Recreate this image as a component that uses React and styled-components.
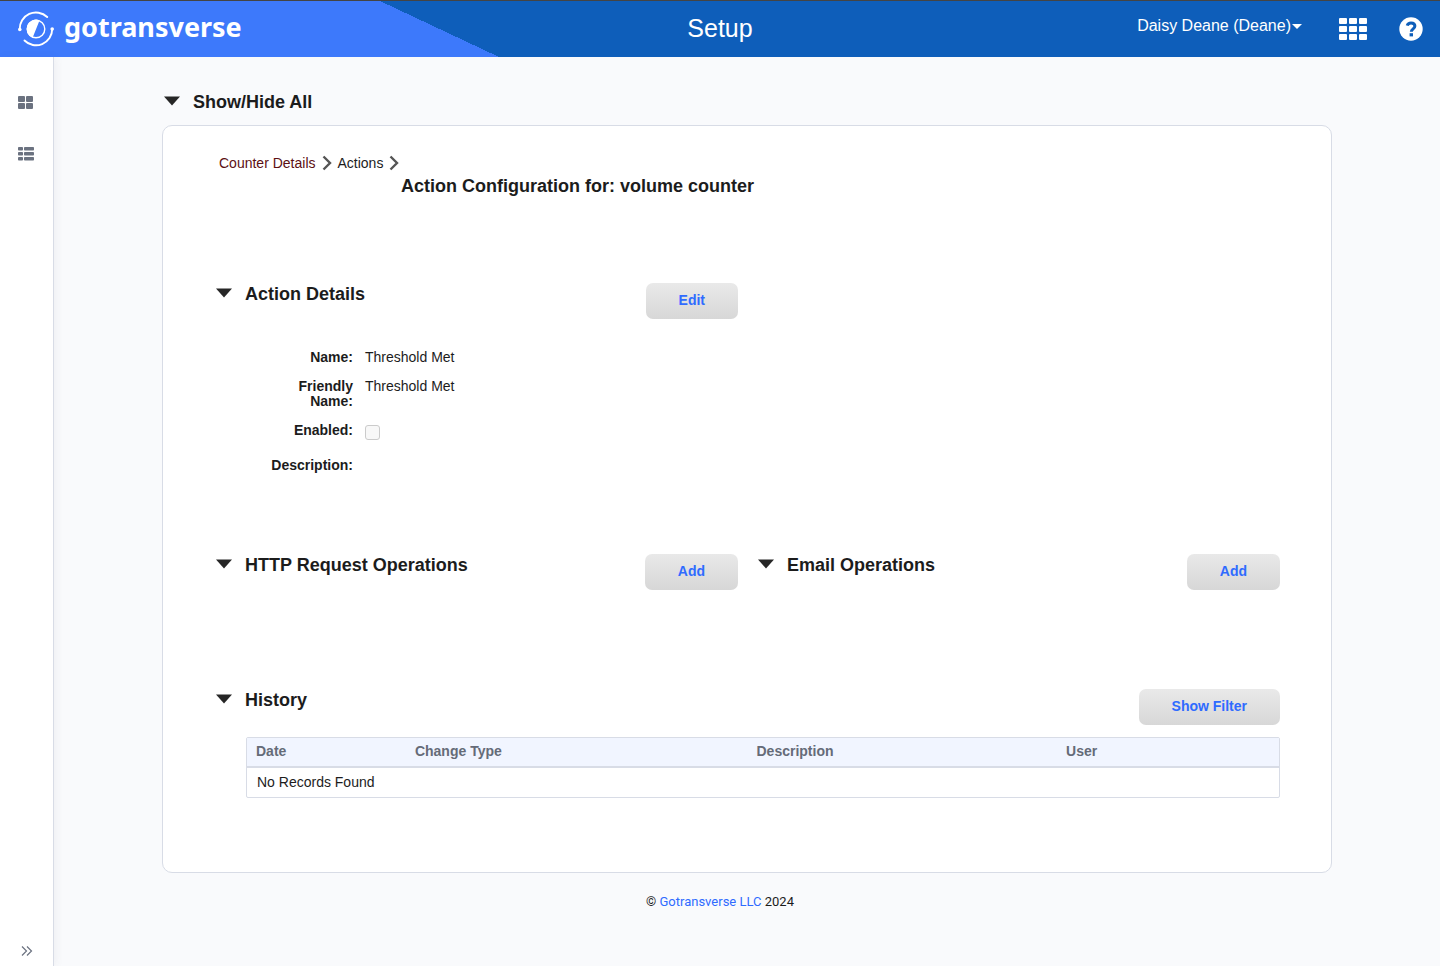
import { useState } from 'react'
import styled, { createGlobalStyle } from 'styled-components'

const GlobalStyle = createGlobalStyle`
  *, *::before, *::after {
    box-sizing: border-box;
  }

  body {
    margin: 0;
    background: #f9fafc;
    color: #1c1c1c;
    font-family: 'Liberation Sans', Arial, sans-serif;
    font-size: 14px;
    line-height: 15px;
  }

  button {
    font-family: inherit;
    cursor: pointer;
  }

  a {
    color: inherit;
    text-decoration: none;
  }
`

const Triangle = () => (
  <svg width="16" height="10" viewBox="0 0 16 10" aria-hidden="true">
    <path d="M0 0.5H16L8 9.5Z" fill="#262626" />
  </svg>
)

const Chevron = () => (
  <svg width="10" height="16" viewBox="0 0 10 16" aria-hidden="true">
    <path d="M1.5 1.5L8 8L1.5 14.5" fill="none" stroke="#555" strokeWidth="2.4" />
  </svg>
)

const LogoMark = () => (
  <svg width="36" height="36" viewBox="0 0 36 36" aria-hidden="true">
    <g fill="none" stroke="#fff" strokeWidth="1.9" strokeLinecap="round">
      <path d="M1.8 18.5A16.2 16.2 0 0 1 29.2 6" />
      <path d="M34.2 18A16.2 16.2 0 0 1 6.5 29.5" />
    </g>
    <circle cx="1.8" cy="18.5" r="1.8" fill="#fff" />
    <circle cx="34.2" cy="18" r="1.8" fill="#fff" />
    <circle cx="18" cy="18" r="8.8" fill="none" stroke="#fff" strokeWidth="1.4" />
    <path d="M21.6 9.3A9.4 9.4 0 1 0 14.6 26.8Z" fill="#fff" />
  </svg>
)

const AppsIcon = () => (
  <svg width="28" height="22" viewBox="0 0 28 22" fill="#fff" aria-hidden="true">
    {[0, 10, 20].map((x) =>
      [0, 8, 16].map((y) => <rect key={`${x}-${y}`} x={x} y={y} width="8" height="6" rx="1" />)
    )}
  </svg>
)

const HelpIcon = () => (
  <svg width="24" height="24" viewBox="0 0 24 24" aria-hidden="true">
    <circle cx="12" cy="12" r="11.7" fill="#fff" />
    <path
      d="M8.2 8.6C8.8 6.7 10.2 5.9 12 5.9C14.2 5.9 15.9 7.1 15.9 9.1C15.9 11.9 12.3 11.8 12.3 14.8"
      fill="none"
      stroke="#0e5eba"
      strokeWidth="3"
    />
    <rect x="10.6" y="16.2" width="3.4" height="3.2" fill="#0e5eba" />
  </svg>
)

const DashboardIcon = () => (
  <svg width="16" height="14" viewBox="0 0 16 14" fill="#6b7280" aria-hidden="true">
    <rect width="7" height="6" rx="1" />
    <rect x="8" width="7" height="6" rx="1" />
    <rect y="7" width="7" height="6" rx="1" />
    <rect x="8" y="7" width="7" height="6" rx="1" />
  </svg>
)

const ListIcon = () => (
  <svg width="16" height="14" viewBox="0 0 16 14" fill="#6b7280" aria-hidden="true">
    {[0, 5, 10].map((y) => (
      <g key={y}>
        <rect y={y} width="5" height="3.6" rx="0.8" />
        <rect x="6" y={y} width="10" height="3.6" rx="0.8" />
      </g>
    ))}
  </svg>
)

const ExpandIcon = () => (
  <svg width="12" height="10" viewBox="0 0 12 10" aria-hidden="true">
    <path d="M1 0.5L5.5 5L1 9.5M6 0.5L10.5 5L6 9.5" fill="none" stroke="#6b7280" strokeWidth="1.2" />
  </svg>
)

const Section = ({ title, action, children }) => {
  const [open, setOpen] = useState(true)

  return (
    <SectionBox>
      <SectionHead>
        <Toggle type="button" aria-expanded={open} onClick={() => setOpen(!open)}>
          <Arrow $open={open}>
            <Triangle />
          </Arrow>
          <Heading>{title}</Heading>
        </Toggle>
        <ActionButton type="button">{action}</ActionButton>
      </SectionHead>
      {open && children}
    </SectionBox>
  )
}

const App = () => {
  const [visible, setVisible] = useState(true)

  return (
    <>
      <GlobalStyle />
      <Page>
        <Header>
          <Brand href="#">
            <LogoMark />
            <BrandName>gotransverse</BrandName>
          </Brand>
          <PageTitle>Setup</PageTitle>
          <Tools>
            <UserMenu type="button">
              Daisy Deane (Deane)
              <Caret />
            </UserMenu>
            <IconButton type="button" aria-label="Applications">
              <AppsIcon />
            </IconButton>
            <IconButton type="button" aria-label="Help">
              <HelpIcon />
            </IconButton>
          </Tools>
        </Header>

        <Body>
          <Sidebar>
            <SideLinks>
              <IconButton type="button" aria-label="Dashboard">
                <DashboardIcon />
              </IconButton>
              <IconButton type="button" aria-label="List">
                <ListIcon />
              </IconButton>
            </SideLinks>
            <ExpandButton type="button" aria-label="Expand menu">
              <ExpandIcon />
            </ExpandButton>
          </Sidebar>

          <Main>
            <ToggleAll>
              <Toggle type="button" aria-expanded={visible} onClick={() => setVisible(!visible)}>
                <Arrow $open={visible}>
                  <Triangle />
                </Arrow>
                <Heading>Show/Hide All</Heading>
              </Toggle>
            </ToggleAll>

            {visible && (
              <Card>
                <Breadcrumb>
                  <Crumb href="#" $visited>
                    Counter Details
                  </Crumb>
                  <Chevron />
                  <Crumb href="#">Actions</Crumb>
                  <Chevron />
                </Breadcrumb>
                <CardTitle>Action Configuration for: volume counter</CardTitle>

                <Sections>
                  <Row $space={81}>
                    <Section title="Action Details" action="Edit">
                      <Fields>
                        <dt>Name:</dt>
                        <dd>Threshold Met</dd>
                        <dt>Friendly Name:</dt>
                        <dd>Threshold Met</dd>
                        <dt>
                          <label htmlFor="enabled">Enabled:</label>
                        </dt>
                        <dd>
                          <Checkbox id="enabled" type="checkbox" disabled />
                        </dd>
                        <dt>Description:</dt>
                        <dd />
                      </Fields>
                    </Section>
                  </Row>
                  <Row $space={99}>
                    <Section title="HTTP Request Operations" action="Add" />
                    <Section title="Email Operations" action="Add" />
                  </Row>
                  <Section title="History" action="Show Filter">
                    <TableWrap>
                      <Table>
                        <thead>
                          <tr>
                            <Th $width="15.4%">Date</Th>
                            <Th $width="33.1%">Change Type</Th>
                            <Th $width="30%">Description</Th>
                            <Th>User</Th>
                          </tr>
                        </thead>
                        <tbody>
                          <tr>
                            <Td colSpan={4}>No Records Found</Td>
                          </tr>
                        </tbody>
                      </Table>
                    </TableWrap>
                  </Section>
                </Sections>
              </Card>
            )}
          </Main>

          <Footer>
            © <FooterLink href="#">Gotransverse LLC</FooterLink> 2024
          </Footer>
        </Body>
      </Page>
    </>
  )
}

const Page = styled.div`
  display: flex;
  flex-direction: column;
  min-height: 100vh;
`

const Header = styled.header`
  display: grid;
  grid-template-columns: 1fr auto 1fr;
  align-items: center;
  height: 57px;
  border-top: 1px solid #444;
  background: linear-gradient(to bottom left, #0e5eba 50%, #3d79fb 50%) 380px 0 / 119px 56px no-repeat,
    linear-gradient(#3d79fb, #3d79fb) 0 0 / 380px 56px no-repeat, #0e5eba;
  color: #fff;
`

const Brand = styled.a`
  display: flex;
  align-items: center;
  gap: 10px;
  padding-left: 18px;
`

const BrandName = styled.span`
  padding-bottom: 4px;
  font-family: 'Noto Sans', sans-serif;
  font-size: 27px;
  font-weight: 700;
  line-height: 32px;
`

const PageTitle = styled.h1`
  margin: 0;
  padding-bottom: 2px;
  font-size: 25px;
  font-weight: 400;
  line-height: 30px;
`

const Tools = styled.div`
  display: flex;
  align-items: center;
  justify-content: flex-end;
  padding-right: 17px;
`

const UserMenu = styled.button`
  display: flex;
  align-items: center;
  gap: 1px;
  margin-right: 37px;
  padding: 0 0 6px;
  border: 0;
  background: none;
  color: inherit;
  font-size: 16px;
  line-height: 20px;
`

const Caret = styled.span`
  border: 5px solid transparent;
  border-top-color: #fff;
  border-bottom: 0;
`

const IconButton = styled.button`
  display: flex;
  padding: 0;
  border: 0;
  background: none;

  & + & {
    margin-left: 32px;
  }
`

const Body = styled.div`
  display: grid;
  flex: 1;
  grid-template-columns: 54px 1fr;
  grid-template-rows: auto 1fr;
`

const Sidebar = styled.nav`
  display: flex;
  flex-direction: column;
  justify-content: space-between;
  grid-row: 1 / 3;
  grid-column: 1;
  padding: 39px 0 10px 18px;
  border-right: 1px solid #d8dce6;
  background: #fff;
  box-shadow: 2px 0 8px rgba(60, 70, 110, 0.06);
`

const SideLinks = styled.div`
  display: flex;
  flex-direction: column;
  gap: 37px;

  ${IconButton} {
    margin: 0;
  }
`

const ExpandButton = styled(IconButton)`
  padding-left: 3px;
`

const Main = styled.main`
  grid-row: 1;
  grid-column: 2;
  width: 100%;
  max-width: 1170px;
  margin: 0 auto;
  padding-top: 34px;
`

const ToggleAll = styled.div`
  padding-left: 2px;
`

const Toggle = styled.button`
  display: flex;
  align-items: flex-start;
  gap: 13px;
  padding: 0;
  border: 0;
  background: none;
  color: inherit;
  text-align: left;
`

const Arrow = styled.span`
  display: flex;
  padding-top: 5px;

  svg {
    transform: ${(props) => (props.$open ? 'none' : 'rotate(-90deg)')};
  }
`

const Heading = styled.span`
  font-size: 18px;
  font-weight: 700;
  line-height: 22px;
`

const Card = styled.section`
  margin-top: 12px;
  padding: 29px 51px 74px 53px;
  border: 1px solid #d8dce6;
  border-radius: 10px;
  background: #fff;
`

const Breadcrumb = styled.nav`
  display: flex;
  align-items: center;
  gap: 6px;
  height: 16px;
  padding-left: 3px;
`

const Crumb = styled.a`
  color: ${(props) => (props.$visited ? '#5c0f12' : '#1c1c1c')};
`

const CardTitle = styled.h2`
  margin: 4px 0 0 185px;
  font-size: 18px;
  line-height: 22px;
`

const Sections = styled.div`
  margin-top: 86px;
`

const Row = styled.div`
  display: grid;
  grid-template-columns: 1fr 1fr;
  gap: 20px;
  margin-bottom: ${(props) => props.$space}px;
`

const SectionBox = styled.section`
  min-width: 0;
`

const SectionHead = styled.div`
  display: flex;
  align-items: flex-start;
  justify-content: space-between;
`

const ActionButton = styled.button`
  height: 36px;
  padding: 0 33px 2px;
  border: 0;
  border-radius: 7px;
  background: linear-gradient(#e9e9e9, #d7d7d7);
  color: #2f6bff;
  font-size: 14px;
  font-weight: 700;
  line-height: 16px;
`

const Fields = styled.dl`
  display: grid;
  grid-template-columns: 96px 1fr;
  gap: 14px 12px;
  margin: 31px 0 0 41px;

  dt {
    font-weight: 700;
    text-align: right;
  }

  dd {
    min-height: 15px;
    margin: 0;
  }
`

const Checkbox = styled.input`
  display: block;
  width: 15px;
  height: 15px;
  margin: 2px 0 4px;
  border: 1px solid #cbcbcb;
  border-radius: 3px;
  background: #f8f8f8;
  appearance: none;
`

const TableWrap = styled.div`
  margin: 12px 0 0 30px;
  border: 1px solid #d8dce6;
  border-radius: 2px;
`

const Table = styled.table`
  width: 100%;
  border-collapse: collapse;
  table-layout: fixed;
`

const Th = styled.th`
  width: ${(props) => props.$width || 'auto'};
  height: 29px;
  padding: 0 9px 2px;
  border-bottom: 2px solid #d8dce6;
  background: #f1f5ff;
  color: #656b78;
  text-align: left;
`

const Td = styled.td`
  height: 30px;
  padding: 0 10px 1px;
`

const Footer = styled.footer`
  grid-row: 2;
  grid-column: 1 / 3;
  padding: 21px 0;
  font-family: Roboto, sans-serif;
  font-size: 13px;
  line-height: 16px;
  text-align: center;
`

const FooterLink = styled.a`
  color: #2f6bff;
`

export default App
